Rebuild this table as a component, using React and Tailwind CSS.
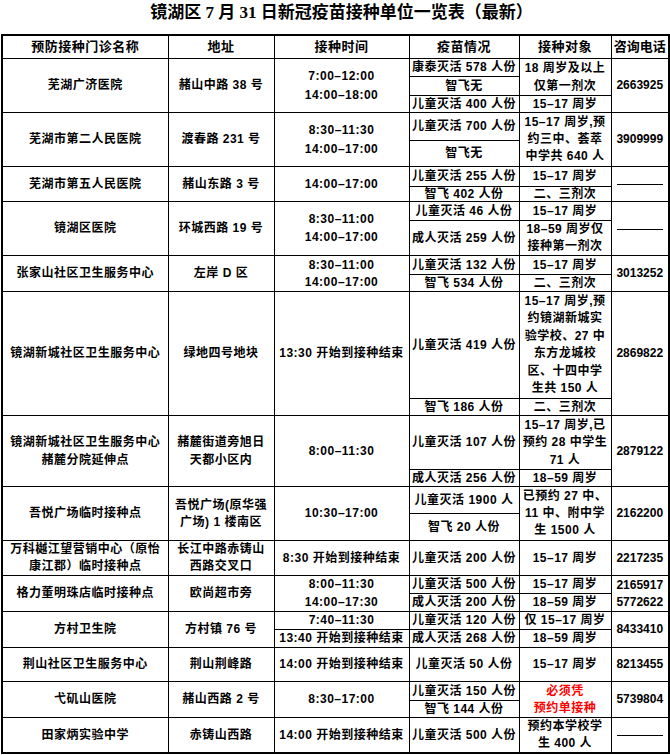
// 镜湖区疫苗接种单位一览表

const cell = 'border border-black text-center align-middle p-0 tracking-[0.5px]';
const line = 'leading-[14px] flex items-center justify-center whitespace-nowrap';

// every line sits in a box of fixed height, so mixed fonts never push a row taller
function C({ rs, lines, lh = 'h-[14px]', className = '' }) {
  const items = Array.isArray(lines) ? lines : [lines];
  return (
    <td rowSpan={rs} className={cell + ' ' + className}>
      {items.map((t, i) => (
        <div key={i} className={lh + ' ' + line}>
          {t}
        </div>
      ))}
    </td>
  );
}

function Phone({ rs, lines, dash }) {
  const items = Array.isArray(lines) ? lines : [lines];
  return (
    <td rowSpan={rs} className="border border-black text-center align-middle p-0">
      {dash ? (
        <div className="mx-auto mt-[2px] h-[1px] w-[46px] bg-black" />
      ) : (
        items.map((t, i) => (
          <div key={i} className={'h-[17px] ' + line}>
            {t}
          </div>
        ))
      )}
    </td>
  );
}

export default function App() {
  return (
    <div className="w-[670px] h-[755px] bg-white text-black font-['Liberation_Sans','Noto_Sans_CJK_SC',sans-serif] overflow-hidden">
      <div className="h-[34px] flex justify-center pt-[1px] pl-[13px] text-[17px] leading-[24px] font-semibold font-['Liberation_Serif','Noto_Sans_CJK_SC',serif]">
        镜湖区 7 月 31 日新冠疫苗接种单位一览表（最新）
      </div>
      <table className="ml-[1px] w-[667px] table-fixed border-collapse border-2 border-black text-[12px] font-bold">
        <colgroup>
          <col className="w-[166px]" />
          <col className="w-[106px]" />
          <col className="w-[135px]" />
          <col className="w-[110px]" />
          <col className="w-[92px]" />
          <col className="w-[58px]" />
        </colgroup>
        <tbody>
          <tr className="h-[23px] text-[13px]">
            <C lines="预防接种门诊名称" />
            <C lines="地址" />
            <C lines="接种时间" />
            <C lines="疫苗情况" />
            <C lines="接种对象" />
            <C lines="咨询电话" className="tracking-normal" />
          </tr>

          {/* 芜湖广济医院 */}
          <tr className="h-[18px]">
            <C rs={3} lines="芜湖广济医院" />
            <C rs={3} lines="赭山中路 38 号" />
            <C rs={3} lh="h-[19px]" lines={['7:00–12:00', '14:00–18:00']} />
            <C lines="康泰灭活 578 人份" />
            <C rs={2} lh="h-[18px]" lines={['18 周岁及以上', '仅第一剂次']} />
            <Phone rs={3} lines="2663925" />
          </tr>
          <tr className="h-[19px]">
            <C lines="智飞无" />
          </tr>
          <tr className="h-[17px]">
            <C lines="儿童灭活 400 人份" />
            <C lines="15–17 周岁" />
          </tr>

          {/* 第二人民医院 */}
          <tr className="h-[28px]">
            <C rs={2} lines="芜湖市第二人民医院" />
            <C rs={2} lines="渡春路 231 号" />
            <C rs={2} lh="h-[19px]" lines={['8:30–11:30', '14:00–17:00']} />
            <C lines="儿童灭活 700 人份" />
            <C rs={2} lh="h-[17px]" lines={['15–17 周岁,预', '约三中、荟萃', '中学共 640 人']} />
            <Phone rs={2} lines="3909999" />
          </tr>
          <tr className="h-[26px]">
            <C lines="智飞无" />
          </tr>

          {/* 第五人民医院 */}
          <tr className="h-[20px]">
            <C rs={2} lines="芜湖市第五人民医院" />
            <C rs={2} lines="赭山东路 3 号" />
            <C rs={2} lines="14:00–17:00" />
            <C lines="儿童灭活 255 人份" />
            <C lines="15–17 周岁" />
            <Phone rs={2} dash />
          </tr>
          <tr className="h-[15px]">
            <C lines="智飞 402 人份" />
            <C lines="二、三剂次" />
          </tr>

          {/* 镜湖区医院 */}
          <tr className="h-[19px]">
            <C rs={2} lines="镜湖区医院" />
            <C rs={2} lines="环城西路 19 号" />
            <C rs={2} lh="h-[18px]" lines={['8:30–11:00', '14:00–17:00']} />
            <C lines="儿童灭活 46 人份" />
            <C lines="15–17 周岁" />
            <Phone rs={2} dash />
          </tr>
          <tr className="h-[35px]">
            <C lines="成人灭活 259 人份" />
            <C lh="h-[17px]" lines={['18–59 周岁仅', '接种第一剂次']} />
          </tr>

          {/* 张家山 */}
          <tr className="h-[19px]">
            <C rs={2} lines="张家山社区卫生服务中心" />
            <C rs={2} lines="左岸 D 区" />
            <C rs={2} lh="h-[17px]" lines={['8:30–11:00', '14:00–17:00']} />
            <C lines="儿童灭活 132 人份" />
            <C lines="15–17 周岁" />
            <Phone rs={2} lines="3013252" />
          </tr>
          <tr className="h-[17px]">
            <C lines="智飞 534 人份" />
            <C lines="二、三剂次" />
          </tr>

          {/* 镜湖新城 */}
          <tr className="h-[107px]">
            <C rs={2} lines="镜湖新城社区卫生服务中心" />
            <C rs={2} lines="绿地四号地块" />
            <C rs={2} lines="13:30 开始到接种结束" />
            <C lines="儿童灭活 419 人份" />
            <C
              lh="h-[17.5px]"
              lines={['15–17 周岁,预', '约镜湖新城实', '验学校、27 中', '东方龙城校', '区、十四中学', '生共 150 人']}
            />
            <Phone rs={2} lines="2869822" />
          </tr>
          <tr className="h-[17px]">
            <C lines="智飞 186 人份" />
            <C lines="二、三剂次" />
          </tr>

          {/* 赭麓分院 */}
          <tr className="h-[54px]">
            <C rs={2} lh="h-[18px]" lines={['镜湖新城社区卫生服务中心', '赭麓分院延伸点']} />
            <C rs={2} lh="h-[18px]" lines={['赭麓街道旁旭日', '天都小区内']} />
            <C rs={2} lines="8:00–11:30" />
            <C lines="儿童灭活 107 人份" />
            <C lh="h-[17.5px]" lines={['15–17 周岁,已', '预约 28 中学生', '71 人']} />
            <Phone rs={2} lines="2879122" />
          </tr>
          <tr className="h-[17px]">
            <C lines="成人灭活 256 人份" />
            <C lines="18–59 周岁" />
          </tr>

          {/* 吾悦广场 */}
          <tr className="h-[27px]">
            <C rs={2} lines="吾悦广场临时接种点" />
            <C rs={2} lh="h-[17px]" lines={['吾悦广场(原华强', '广场) 1 楼南区']} />
            <C rs={2} lines="10:30–17:00" />
            <C lines="儿童灭活 1900 人" />
            <C rs={2} lh="h-[17px]" lines={['已预约 27 中、', '11 中、附中学', '生 1500 人']} />
            <Phone rs={2} lines="2162200" />
          </tr>
          <tr className="h-[27px]">
            <C lines="智飞 20 人份" />
          </tr>

          {/* 万科 */}
          <tr className="h-[35px]">
            <C lh="h-[17px]" lines={['万科樾江望营销中心（原怡', '康江郡）临时接种点']} />
            <C lh="h-[17px]" lines={['长江中路赤铸山', '西路交叉口']} />
            <C lines="8:30 开始到接种结束" />
            <C lines="儿童灭活 200 人份" />
            <C lines="15–17 周岁" />
            <Phone lines="2217235" />
          </tr>

          {/* 格力 */}
          <tr className="h-[18px]">
            <C rs={2} lines="格力董明珠店临时接种点" />
            <C rs={2} lines="欧尚超市旁" />
            <C rs={2} lh="h-[17.5px]" lines={['8:00–11:30', '14:00–17:30']} />
            <C lines="儿童灭活 500 人份" />
            <C lines="15–17 周岁" />
            <Phone rs={2} lines={['2165917', '5772622']} />
          </tr>
          <tr className="h-[18px]">
            <C lines="成人灭活 200 人份" />
            <C lines="18–59 周岁" />
          </tr>

          {/* 方村 */}
          <tr className="h-[18px]">
            <C rs={2} lines="方村卫生院" />
            <C rs={2} lines="方村镇 76 号" />
            <C lines="7:40–11:30" />
            <C lines="儿童灭活 120 人份" />
            <C lines="仅 15–17 周岁" />
            <Phone rs={2} lines="8433410" />
          </tr>
          <tr className="h-[18px]">
            <C lines="13:40 开始到接种结束" />
            <C lines="成人灭活 268 人份" />
            <C lines="18–59 周岁" />
          </tr>

          {/* 荆山 */}
          <tr className="h-[34px]">
            <C lines="荆山社区卫生服务中心" />
            <C lines="荆山荆峰路" />
            <C lines="14:00 开始到接种结束" />
            <C lines="儿童灭活 50 人份" />
            <C lines="15–17 周岁" />
            <Phone lines="8213455" />
          </tr>

          {/* 弋矶山 */}
          <tr className="h-[19px]">
            <C rs={2} lines="弋矶山医院" />
            <C rs={2} lines="赭山西路 2 号" />
            <C rs={2} lines="8:30–17:00" />
            <C lines="儿童灭活 150 人份" />
            <C rs={2} lh="h-[17px]" className="text-[#ff0000]" lines={['必须凭', '预约单接种']} />
            <Phone rs={2} lines="5739804" />
          </tr>
          <tr className="h-[17px]">
            <C lines="智飞 144 人份" />
          </tr>

          {/* 田家炳 */}
          <tr className="h-[36px]">
            <C lines="田家炳实验中学" />
            <C lines="赤铸山西路" />
            <C lines="14:00 开始到接种结束" />
            <C lines="儿童灭活 500 人份" />
            <C lh="h-[17px]" lines={['预约本学校学', '生 400 人']} />
            <Phone dash />
          </tr>
        </tbody>
      </table>
    </div>
  );
}
